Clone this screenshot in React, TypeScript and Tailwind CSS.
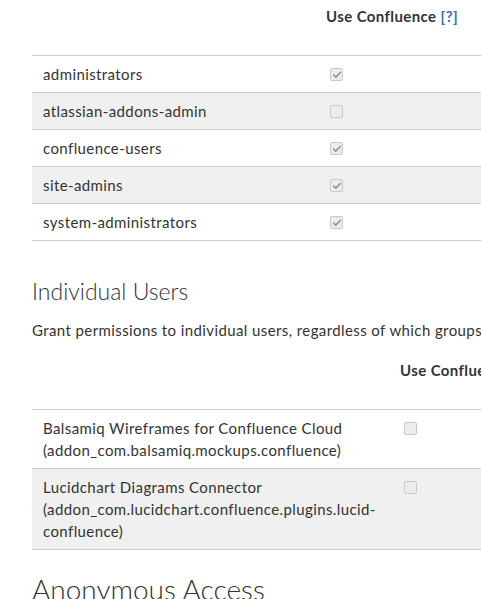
import { Check } from 'lucide-react';

const groups = [
	{ name: 'administrators', checked: true },
	{ name: 'atlassian-addons-admin', checked: false },
	{ name: 'confluence-users', checked: true },
	{ name: 'site-admins', checked: true },
	{ name: 'system-administrators', checked: true },
];

const users = [
	{
		name: 'Balsamiq Wireframes for Confluence Cloud',
		lines: ['(addon_com.balsamiq.mockups.confluence)'],
	},
	{
		name: 'Lucidchart Diagrams Connector',
		lines: ['(addon_com.lucidchart.confluence.plugins.lucid-', 'confluence)'],
	},
];

function Box({ checked }: { checked: boolean }) {
	return (
		<span className="ml-[4px] mt-[5px] flex size-[13px] items-center justify-center rounded-[2px] border border-[#c9c9c9] bg-[#ececec]">
			{checked && <Check className="size-[10px] text-[#959595]" strokeWidth={4} />}
		</span>
	);
}

export default function App() {
	return (
		<div className="h-[599px] w-[481px] overflow-hidden bg-white pl-[32px] font-['Lato','Open_Sans',sans-serif] text-[15px] leading-[22px] tracking-[0.4px] text-[#333333]">
			<div className="w-[480px]">
				<div className="flex h-[56px] border-b border-[#cccccc] pt-[5px]">
					<div className="w-[284px] shrink-0" />
					<div className="whitespace-nowrap pl-[10px] font-bold">
						Use Confluence <span className="text-[#3572b0]">[?]</span>
					</div>
				</div>
				{groups.map((g, i) => (
					<div
						key={g.name}
						className={`flex border-b border-[#cccccc] py-[7px] ${i % 2 === 1 ? 'bg-[#f0f0f0]' : 'bg-white'}`}
					>
						<div className="w-[284px] shrink-0 px-[11px]">{g.name}</div>
						<div className="pl-[10px]">
							<Box checked={g.checked} />
						</div>
					</div>
				))}
			</div>

			<h2 className="mt-[35px] text-[23px] font-light leading-[30px] tracking-normal">Individual Users</h2>
			<p className="mt-[13px] whitespace-nowrap">
				Grant permissions to individual users, regardless of which groups they belong to.
			</p>

			<div className="mt-[18px] w-[480px]">
				<div className="flex h-[51px] border-b border-[#cccccc]">
					<div className="w-[358px] shrink-0" />
					<div className="whitespace-nowrap pl-[10px] font-bold">
						Use Confluence <span className="text-[#3572b0]">[?]</span>
					</div>
				</div>
				{users.map((u, i) => (
					<div
						key={u.name}
						className={`flex border-b border-[#cccccc] py-[7px] ${i % 2 === 1 ? 'bg-[#f0f0f0]' : 'bg-white'}`}
					>
						<div className="w-[358px] shrink-0 px-[11px]">
							<div>{u.name}</div>
							{u.lines.map((l) => (
								<div key={l}>{l}</div>
							))}
						</div>
						<div className="pl-[10px]">
							<Box checked={false} />
						</div>
					</div>
				))}
			</div>

			<h2 className="mt-[22px] whitespace-nowrap text-[28px] font-light leading-[35px] tracking-normal">Anonymous Access</h2>
		</div>
	);
}
